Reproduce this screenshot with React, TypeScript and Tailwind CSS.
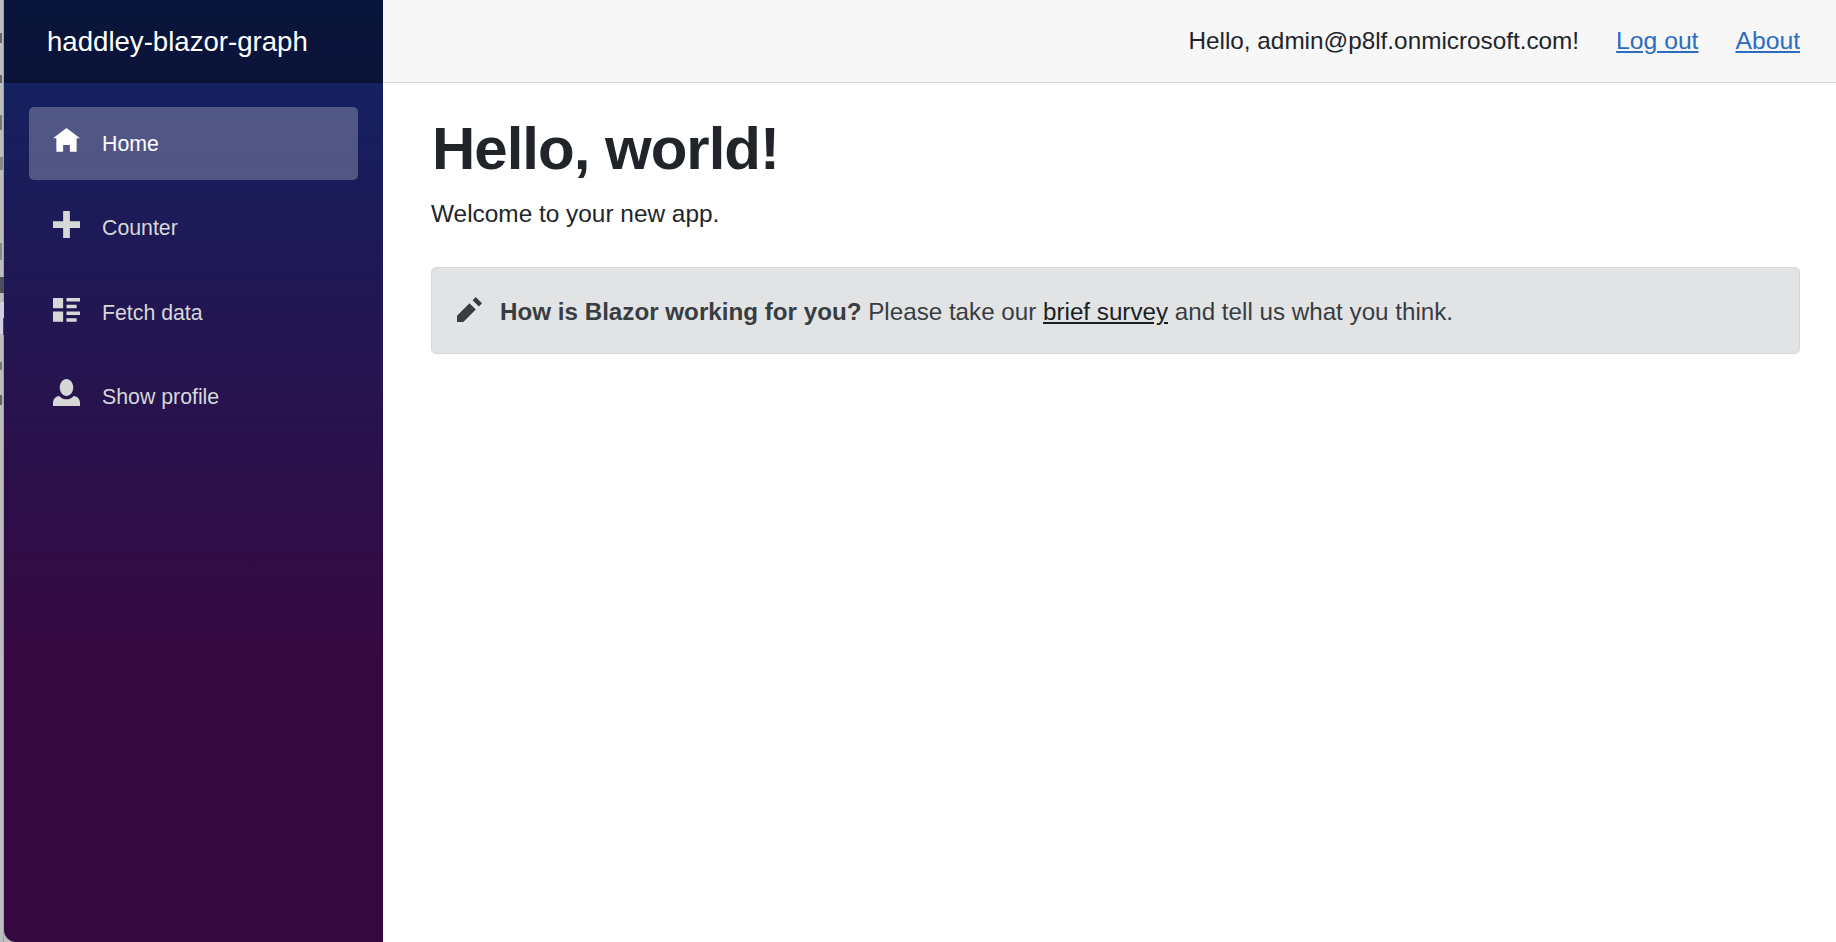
function HomeIcon() {
  return (
    <svg viewBox="0 0 8 8" className="h-[27px] w-[27px] -translate-y-[2px] fill-current">
      <path d="M4 0 0 3h1v4h2V5h2v2h2V3h1L4 0z" />
    </svg>
  )
}

function PlusIcon() {
  return (
    <svg viewBox="0 0 8 8" className="h-[27px] w-[27px] -translate-y-1 fill-current">
      <path d="M3 0v3H0v2h3v3h2V5h3V3H5V0H3z" />
    </svg>
  )
}

function ListIcon() {
  return (
    <svg viewBox="0 0 8 8" className="h-[27px] w-[27px] -translate-y-px fill-current">
      <path d="M0 0v3h3V0H0zm4 0v1h4V0H4zm0 2v1h3V2H4zM0 4v3h3V4H0zm4 0v1h4V4H4zm0 2v1h3V6H4z" />
    </svg>
  )
}

function PersonIcon() {
  return (
    <svg viewBox="0 0 8 8" className="h-[27px] w-[27px] -translate-y-[5px] fill-current">
      <path d="M4 0C2.9 0 2 1.12 2 2.5S2.9 5 4 5s2-1.12 2-2.5S5.1 0 4 0zM1.910 5C.85 5.050 0 5.920 0 7v1h8V7c0-1.080-.84-1.950-1.910-2-.54.610-1.280 1-2.090 1-.81 0-1.550-.390-2.090-1z" />
    </svg>
  )
}

function PencilIcon() {
  return (
    <svg viewBox="0 0 8 8" className="h-[25px] w-[25px] -translate-y-[3px] fill-current">
      <path d="M6 0L5 1l2 2 1-1-2-2zM4 2L0 6v2h2l4-4-2-2z" />
    </svg>
  )
}

function NavItem({ icon, label, active }: { icon: React.ReactNode; label: string; active?: boolean }) {
  return (
    <a
      href="#"
      className={
        active
          ? 'flex h-[73px] items-center rounded-[5px] bg-white/25 pl-6 text-white'
          : 'flex h-[73px] items-center rounded-[5px] pl-6 text-[#d7d7d7]'
      }
    >
      <span className="mr-[22px] flex w-[27px]">{icon}</span>
      <span className="translate-y-px text-[21.3px]">{label}</span>
    </a>
  )
}

// sliver of the window behind the browser, mostly clipped text
function BackWindowStrip() {
  return (
    <div className="relative w-1 shrink-0 border-r border-[#a0a0a0] bg-[#bdbdbd]">
      <div className="absolute left-0 top-[33px] h-[10px] w-[2px] bg-[#666]" />
      <div className="absolute left-0 top-[75px] h-[8px] w-[2px] bg-[#666]" />
      <div className="absolute left-0 top-[115px] h-[15px] w-[2px] bg-[#777]" />
      <div className="absolute left-0 top-[157px] h-[13px] w-[3px] bg-[#888]" />
      <div className="absolute left-0 top-[243px] h-[17px] w-[2px] bg-[#888]" />
      <div className="absolute left-0 top-[277px] h-[16px] w-1 bg-[#4b4f5c]" />
      <div className="absolute left-0 top-[302px] h-[32px] w-1 bg-[#cfcfe0]" />
      <div className="absolute left-[3px] top-[318px] h-[17px] w-px bg-[#8c2a2a]" />
      <div className="absolute left-0 top-[362px] h-[8px] w-[2px] bg-[#777]" />
      <div className="absolute left-0 top-[395px] h-[10px] w-[2px] bg-[#666]" />
    </div>
  )
}

export default function App() {
  return (
    <div className="flex h-[942px] w-[1836px] overflow-hidden bg-[#bdbdbd] font-['Liberation_Sans',Arial,sans-serif]">
      <BackWindowStrip />
      <aside className="flex w-[379px] shrink-0 flex-col rounded-bl-xl bg-linear-to-b/srgb from-[#102464] to-[#360840] to-70%">
        <div className="flex h-[83px] shrink-0 items-center bg-black/40 pl-[43px] text-[27.6px] text-white">
          haddley-blazor-graph
        </div>
        <nav className="flex flex-col gap-[11.6px] px-[25px] pt-6">
          <NavItem icon={<HomeIcon />} label="Home" active />
          <NavItem icon={<PlusIcon />} label="Counter" />
          <NavItem icon={<ListIcon />} label="Fetch data" />
          <NavItem icon={<PersonIcon />} label="Show profile" />
        </nav>
      </aside>
      <div className="flex min-w-0 flex-1 flex-col bg-white">
        <header className="flex h-[83px] shrink-0 items-center justify-end gap-[37px] border-b border-[#d6d5d5] bg-[#f7f7f7] pr-9 text-[24.3px] text-[#212529]">
          <span>Hello, admin@p8lf.onmicrosoft.com!</span>
          <a href="#" className="text-[24.7px] text-[#2a6cc2] underline">Log out</a>
          <a href="#" className="text-[24.7px] text-[#2a6cc2] underline">About</a>
        </header>
        <main className="flex flex-col pl-[48px] pr-9 pt-[30px]">
          <h1 className="ml-px text-[60px] font-bold leading-[72px] tracking-[-1px] text-[#212529]">Hello, world!</h1>
          <p className="mt-[11px] text-[24.4px] leading-9 text-[#212529]">Welcome to your new app.</p>
          <div className="mt-[35px] flex h-[87px] items-center rounded-[5px] border border-[#d6d8db] bg-[#e2e3e5] pl-[25px] pt-[3px] text-[#383d41]">
            <span className="mr-[18px] flex"><PencilIcon /></span>
            <p className="text-[24.2px]">
              <strong className="font-bold">How is Blazor working for you?</strong> Please take our{' '}
              <a href="#" className="text-[#1b1e21] underline">brief survey</a> and tell us what you think.
            </p>
          </div>
        </main>
      </div>
    </div>
  )
}
